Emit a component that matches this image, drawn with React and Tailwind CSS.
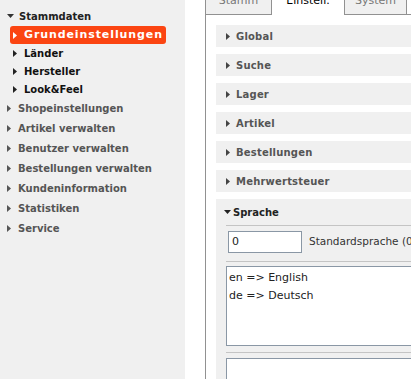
import React from "react";

const Right = ({ color = "#333", className = "" }) => (
  <svg width="4" height="7" viewBox="0 0 4 7" className={className}>
    <path d="M0 0 L4 3.5 L0 7 Z" fill={color} />
  </svg>
);
const Down = ({ color = "#222", className = "" }) => (
  <svg width="7" height="4" viewBox="0 0 7 4" className={className}>
    <path d="M0 0 L7 0 L3.5 4 Z" fill={color} />
  </svg>
);

const topItems = [
  "Shopeinstellungen",
  "Artikel verwalten",
  "Benutzer verwalten",
  "Bestellungen verwalten",
  "Kundeninformation",
  "Statistiken",
  "Service",
];

const subItems = ["Länder", "Hersteller", "Look&Feel"];

const sections = ["Global", "Suche", "Lager", "Artikel", "Bestellungen", "Mehrwertsteuer"];

export default function App() {
  return (
    <div
      className="w-[411px] h-[379px] overflow-hidden flex bg-white"
      style={{ fontFamily: '"DejaVu Sans", Verdana, sans-serif' }}
    >
      <aside className="w-[185px] shrink-0 bg-[#f0f0f0] pt-[6px]">
        <div className="h-[20px] flex items-center pl-[7px] text-[10px] font-bold text-[#222]">
          <Down color="#333" />
          <span className="ml-[5px]">Stammdaten</span>
        </div>
        <div className="pl-[10px] pr-[19px]">
          <div className="h-[18px] rounded-[3px] bg-[#fb4512] flex items-center pl-[3px] text-white text-[11px] font-bold tracking-[0.9px]">
            <Right color="#fff" />
            <span className="ml-[7px]">Grundeinstellungen</span>
          </div>
          {subItems.map((s) => (
            <div
              key={s}
              className="h-[18px] flex items-center pl-[3px] text-[10px] font-bold text-[#111]"
            >
              <Right color="#222" />
              <span className="ml-[7px]">{s}</span>
            </div>
          ))}
        </div>
        {topItems.map((s) => (
          <div
            key={s}
            className="h-[20px] flex items-center pl-[7px] text-[10px] font-bold text-[#555]"
          >
            <Right color="#555" />
            <span className="ml-[7px]">{s}</span>
          </div>
        ))}
      </aside>

      <main className="flex-1 min-w-0 pl-[20px] flex flex-col">
        <div className="flex items-end -mt-[13px] h-[28px] text-[11px]">
          <div className="w-[67px] shrink-0 h-[28px] border border-[#919191] bg-[#f0f0f0] text-[#777] flex items-center justify-center">
            Stamm
          </div>
          <div className="w-[73px] shrink-0 h-[28px] border-t border-r border-[#919191] bg-white text-black flex items-center justify-center">
            Einstell.
          </div>
          <div className="w-[62px] shrink-0 h-[28px] border-t border-r border-b border-[#919191] bg-[#f0f0f0] text-[#777] flex items-center justify-center">
            System
          </div>
          <div className="flex-1 h-[28px] border-b border-[#919191]" />
        </div>

        <div className="flex-1 border-l border-[#919191] pt-[10px] pl-[10px] flex flex-col">
          {sections.map((s) => (
            <div
              key={s}
              className="h-[22px] mb-[7px] bg-[#f0f0f0] flex items-center pl-[10px] text-[10px] font-bold text-[#555] tracking-[0.2px]"
            >
              <Right color="#444" />
              <span className="ml-[6px]">{s}</span>
            </div>
          ))}

          <div className="flex-1 bg-[#f0f0f0] pl-[10px]">
            <div className="h-[26px] flex items-center -ml-[2px] text-[10px] font-bold text-[#222]">
              <Down color="#222" />
              <span className="ml-[2px]">Sprache</span>
            </div>
            <div className="border-t border-[#c4c4c4] pt-[5px] pb-[8px] flex items-center">
              <div className="ml-[2px] shrink-0 w-[74px] h-[22px] border border-[#8a97a5] bg-white flex items-center pl-[3px] text-[11px] text-[#222]">
                0
              </div>
              <span className="ml-[7px] text-[10.5px] text-[#333] whitespace-nowrap">
                Standardsprache (0)
              </span>
            </div>
            <div className="border-t border-[#c4c4c4] pt-[4px] pb-[6px]">
              <div className="h-[80px] w-[220px] border border-[#8a97a5] bg-white pl-[2px] pt-[2px] text-[11px] leading-[18px] text-[#222]">
                <div>en =&gt; English</div>
                <div>de =&gt; Deutsch</div>
              </div>
            </div>
            <div className="border-t border-[#c4c4c4] pt-[5px]">
              <div className="h-[40px] w-[220px] border border-[#8a97a5] bg-white" />
            </div>
          </div>
        </div>
      </main>
    </div>
  );
}
